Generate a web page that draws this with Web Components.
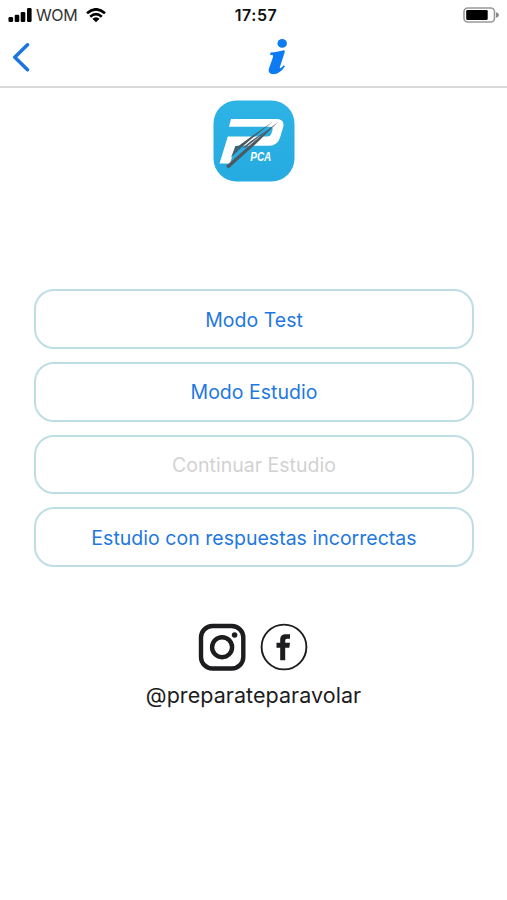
<!DOCTYPE html>
<html lang="es">
<head>
<meta charset="utf-8">
<meta name="viewport" content="width=device-width, initial-scale=1">
<title>PCA</title>
<style>
    body {
        margin: 0;
        background: #fff;
        font-family: Inter, "Liberation Sans", sans-serif;
    }
</style>
</head>
<body>
<app-screen>
    <status-bar slot="header" carrier="WOM" time="17:57"></status-bar>
    <nav-bar slot="header"></nav-bar>
    <app-logo label="PCA"></app-logo>
    <mode-menu>
        <mode-button>Modo Test</mode-button>
        <mode-button>Modo Estudio</mode-button>
        <mode-button disabled>Continuar Estudio</mode-button>
        <mode-button>Estudio con respuestas incorrectas</mode-button>
    </mode-menu>
    <social-links>@preparateparavolar</social-links>
</app-screen>

<script>
'use strict';

(function() {
    class BaseElement extends HTMLElement {
        constructor() {
            super();
            this.attachShadow({ mode: 'open' }).innerHTML = this.render();
        }
    }

    class AppScreen extends BaseElement {
        render() {
            return `
                <style>
                    :host {
                        display: flex;
                        flex-direction: column;
                        height: 900px;
                        overflow: hidden;
                    }
                    main {
                        display: flex;
                        flex-direction: column;
                        align-items: center;
                        padding-top: 12px;
                    }
                </style>
                <slot name="header"></slot>
                <main><slot></slot></main>
            `;
        }
    }

    class StatusBar extends BaseElement {
        render() {
            return `
                <style>
                    :host {
                        display: grid;
                        grid-template-columns: 1fr auto 1fr;
                        align-items: center;
                        box-sizing: border-box;
                        height: 30px;
                        padding: 0 8px;
                        color: #111;
                        font-size: 16px;
                    }
                    .left {
                        display: flex;
                        align-items: center;
                    }
                    .carrier {
                        margin: 0 9px 0 4px;
                        letter-spacing: -.4px;
                        color: #333;
                    }
                    .time {
                        font-weight: 600;
                        letter-spacing: .5px;
                        padding-left: 5px;
                    }
                    .battery {
                        justify-self: end;
                    }
                    svg {
                        display: block;
                    }
                </style>
                <div class="left">
                    <svg width="24" height="15" viewBox="0 0 24 15">
                        <rect x=".5" y="9" width="4.6" height="5" rx="1.3"/>
                        <rect x="6.7" y="6.7" width="4.6" height="7.3" rx="1.3"/>
                        <rect x="12.7" y="4" width="4.6" height="10" rx="1.3"/>
                        <rect x="19" y="0" width="4.6" height="14" rx="1.3"/>
                    </svg>
                    <span class="carrier">${this.getAttribute('carrier') || ''}</span>
                    <svg width="20" height="15" viewBox="0 0 20 15">
                        <g fill="none" stroke="#000" stroke-width="2.6">
                            <path d="M1 5.2 Q10-2.6 19 5.2"/>
                            <path d="M4.2 8.7 Q10 3.6 15.8 8.7"/>
                        </g>
                        <path d="M6.4 10.8 Q10 7.8 13.6 10.8 L10 14.3Z"/>
                    </svg>
                </div>
                <span class="time">${this.getAttribute('time') || ''}</span>
                <svg class="battery" width="36" height="16" viewBox="0 0 36 16">
                    <rect x="1" y="1" width="30.5" height="14" rx="3.8" fill="#fff" stroke="#999" stroke-width="1.6"/>
                    <rect x="3.2" y="3" width="21.5" height="10" rx="1.3"/>
                    <path d="M33 5.3 Q36 6 36 8 T33 10.7Z" fill="#888"/>
                </svg>
            `;
        }
    }

    class NavBar extends BaseElement {
        render() {
            return `
                <style>
                    :host {
                        display: grid;
                        grid-template-columns: 1fr auto 1fr;
                        align-items: center;
                        box-sizing: border-box;
                        height: 58px;
                        padding: 0 12px 2px;
                        border-bottom: 2px solid #d9d9d9;
                    }
                    .info {
                        margin-left: 49px;
                    }
                    svg {
                        display: block;
                    }
                </style>
                <svg width="19" height="30" viewBox="0 0 19 30">
                    <path d="M15.5 2.8 L2.8 15.2 L15.5 27.7" fill="none" stroke="#1a75e0" stroke-width="3.5" stroke-linecap="round" stroke-linejoin="round"/>
                </svg>
                <svg class="info" width="22" height="38" viewBox="0 0 22 38" fill="#0d7bf2">
                    <ellipse cx="15.2" cy="5.4" rx="4.7" ry="4.3"/>
                    <path d="M3.4 14.4 C8 14.2 12.5 13.2 16 12.4 Q18.4 11.8 17.7 14.2 L12.9 28.9 Q12.4 30.9 13.7 30.1 Q15.2 29.2 16.6 27.2 L17.9 28.3 C14.8 33.4 10.6 36.2 6.4 36.2 C2.5 36.2 1 33.9 2 30.6 L6 18.9 Q6.6 17 5 17 L3.2 17.1Z"/>
                </svg>
            `;
        }
    }

    class AppLogo extends BaseElement {
        render() {
            return `
                <style>
                    :host {
                        display: block;
                        width: 82px;
                        height: 82px;
                    }
                    svg {
                        display: block;
                    }
                    text {
                        font: italic bold 12px "Liberation Sans", sans-serif;
                    }
                </style>
                <svg width="82" height="82" viewBox="0 0 82 82">
                    <defs>
                        <linearGradient id="sky" x1="0" y1="0" x2="0" y2="1">
                            <stop offset="0" stop-color="#2eb3e5"/>
                            <stop offset="1" stop-color="#25abe1"/>
                        </linearGradient>
                    </defs>
                    <rect x=".5" y=".5" width="81" height="81" rx="23" fill="url(#sky)"/>
                    <path d="M18 19 H63 Q72 19 70.2 27 L67.4 36.5 Q65 45.8 56 45.8 H22.5 L17 63.5 H6.5 L14.8 36.5 H54.5 Q57.3 36.5 58.2 34 L59.5 30 Q60.4 26.7 57 26.7 H16Z" fill="#fff"/>
                    <path d="M22.5 46 H30 L18 57.5Z" fill="#42606f"/>
                    <g fill="#4b5960">
                        <path d="M60.5 21.3 L37 37.5 L24 47 L29 47 L38.5 38.8Z"/>
                        <path d="M65.5 21.5 L41 41.5 L13 66 L15.5 68.5 L43 43.7Z"/>
                        <path d="M61.5 25 L38 41 L30 47.5 L32.5 47.5 L39.5 42Z"/>
                    </g>
                    <text x="37.3" y="61.3" fill="#fff" textLength="21" lengthAdjust="spacingAndGlyphs">${this.getAttribute('label') || ''}</text>
                </svg>
            `;
        }
    }

    class ModeMenu extends BaseElement {
        render() {
            return `
                <style>
                    :host {
                        display: flex;
                        flex-direction: column;
                        gap: 13px;
                        width: 440px;
                        margin-top: 107px;
                    }
                </style>
                <slot></slot>
            `;
        }
    }

    class ModeButton extends BaseElement {
        render() {
            return `
                <style>
                    :host {
                        display: block;
                    }
                    button {
                        display: block;
                        box-sizing: border-box;
                        width: 100%;
                        height: 59.75px;
                        padding: 1.6px 0 0 1px;
                        border: 2px solid #bfdde5;
                        border-radius: 20px;
                        background: #fff;
                        color: #1f78e0;
                        font: inherit;
                        font-size: 19.5px;
                        letter-spacing: .02px;
                    }
                    button:disabled {
                        color: #d2d2d2;
                    }
                </style>
                <button type="button" ${this.hasAttribute('disabled') ? 'disabled' : ''}><slot></slot></button>
            `;
        }
    }

    class SocialLinks extends BaseElement {
        render() {
            return `
                <style>
                    :host {
                        display: flex;
                        flex-direction: column;
                        align-items: center;
                        margin-top: 56px;
                        color: #1c1c1e;
                        font-size: 21.5px;
                        letter-spacing: .05px;
                        line-height: 28px;
                    }
                    .icons {
                        display: flex;
                        gap: 14px;
                        margin-right: 1px;
                        margin-bottom: 10px;
                    }
                    svg {
                        display: block;
                    }
                </style>
                <div class="icons">
                    <svg width="48" height="48" viewBox="0 0 48 48">
                        <g fill="none" stroke="#1d1d1f">
                            <rect x="3" y="3" width="42.3" height="42.5" rx="11.5" stroke-width="4.4"/>
                            <circle cx="24.1" cy="24.2" r="10" stroke-width="4.4"/>
                        </g>
                        <circle cx="36.6" cy="12" r="2.8" fill="#1d1d1f"/>
                    </svg>
                    <svg width="48" height="48" viewBox="0 0 48 48">
                        <circle cx="24" cy="24" r="22.4" fill="none" stroke="#1d1d1f" stroke-width="1.9"/>
                        <path d="M20.2 37.3 V24.8 H16.5 V19.8 H20.2 V17.2 C20.2 12.8 22.4 11.3 26 11.3 H30 V15.8 H27.4 C25.8 15.8 25.2 16.5 25.2 18 V19.8 H30 L29.3 24.8 H25.2 V37.3Z" fill="#1d1d1f"/>
                    </svg>
                </div>
                <span><slot></slot></span>
            `;
        }
    }

    customElements.define('app-screen', AppScreen);
    customElements.define('status-bar', StatusBar);
    customElements.define('nav-bar', NavBar);
    customElements.define('app-logo', AppLogo);
    customElements.define('mode-menu', ModeMenu);
    customElements.define('mode-button', ModeButton);
    customElements.define('social-links', SocialLinks);
})();
</script>
</body>
</html>
